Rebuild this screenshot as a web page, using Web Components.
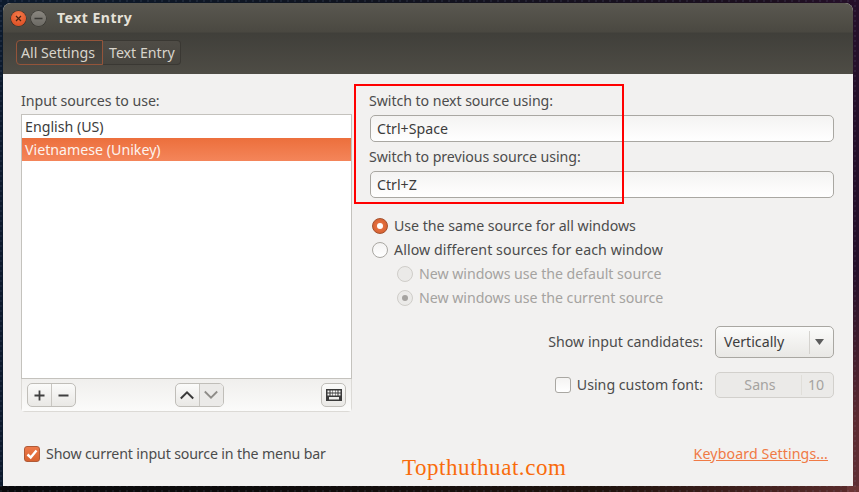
<!DOCTYPE html>
<html><head><meta charset="utf-8">
<style>
html,body{margin:0;padding:0;height:100%}
body{width:859px;height:492px;overflow:hidden;font-family:"Noto Sans","Open Sans",sans-serif}
</style></head><body>
<te-desktop>
  <te-window>
    <te-titlebar slot="title">Text Entry</te-titlebar>
    <te-breadcrumb slot="crumbs"></te-breadcrumb>
    <te-left slot="left"></te-left>
    <te-right slot="right"></te-right>
  </te-window>
</te-desktop>
<script>
const FONT='"Noto Sans","Open Sans",sans-serif';
function def(name,css,html){
  customElements.define(name,class extends HTMLElement{
    constructor(){super();const s=this.attachShadow({mode:'open'});
      s.innerHTML='<style>'+css+'</style>'+html;}
  });
}
def('te-desktop',`:host{display:block;width:859px;height:492px;box-sizing:border-box;padding:3px 6px 6px 3px;position:relative;
  background:
   radial-gradient(circle at 1px 1px,rgba(150,170,210,.35) 0,transparent 1px) 0 0/7px 5px,
   linear-gradient(180deg,transparent 0,transparent 55%,rgba(110,50,50,.75) 85%,rgba(110,55,55,.8) 100%) right/12px 100% no-repeat,
   linear-gradient(90deg,#0a0a0c 0,#0d0b0b 30%,#1f130d 70%,#4a2422 92%,#5c2c2c 100%) bottom/100% 6px no-repeat,
   linear-gradient(90deg,#0c1a2c 0,#10141f 40%,#1c0f1e 90%,#26102a 100%)}
  .red{position:absolute;left:354px;top:84px;width:266px;height:116px;border:2px solid #f00;pointer-events:none}
  .mark{position:absolute;left:402px;top:454px;font:23px/28px "Liberation Serif",serif;color:#f96c0c;letter-spacing:.55px;white-space:nowrap}`,
  `<slot></slot><div class="red"></div><div class="mark">Topthuthuat.com</div>`);
def('te-window',`:host{display:flex;flex-direction:column;height:100%;background:#f2f1f0;border-radius:8px 8px 0 0;overflow:hidden;color:#4c4c4c}
  .bars{background:linear-gradient(180deg,#5a5850 0,#4a4841 29px,#403f3a 30px,#4e4c45 71px);height:71px;flex:none;display:flex;flex-direction:column}
  .main{flex:1;display:grid;grid-template-columns:331px 465px;column-gap:17px;padding:0 0 0 18px;min-height:0}`,
  `<div class="bars"><slot name="title"></slot><slot name="crumbs"></slot></div><div class="main"><slot name="left"></slot><slot name="right"></slot></div>`);
def('te-titlebar',`:host{display:flex;align-items:center;height:29px;flex:none;padding:1px 0 0 8px;gap:5px;box-sizing:border-box;font:bold 14px ${FONT};color:#e6e2d9}
  .b{width:15px;height:15px;border-radius:50%;display:flex;align-items:center;justify-content:center;flex:none}
  .x{background:radial-gradient(circle at 50% 30%,#f47a4a,#d9461c);box-shadow:0 0 0 .5px #3a2a20}
  .m{background:linear-gradient(#8a8780,#6c6a64);box-shadow:0 0 0 .5px #33322e}
  span{margin:-2px 0 0 6px;letter-spacing:.5px}`,
  `<div class="b x"><svg width="9" height="9" viewBox="0 0 9 9"><path d="M2 2l5 5M7 2l-5 5" stroke="#4a2312" stroke-width="1.2" fill="none"/></svg></div>
   <div class="b m"><svg width="9" height="9" viewBox="0 0 9 9"><path d="M0.500 4.500h8" stroke="#3a3935" stroke-width="1.300" fill="none"/></svg></div>
   <span><slot></slot></span>`);
def('te-breadcrumb',`:host{display:flex;padding:8px 0 0 13px;font:14.2px/23px ${FONT};color:#d8d4cb}
  div{height:25px;box-sizing:border-box;border:1px solid #3a3833;background:linear-gradient(#4f4c46,#47453f);display:flex;align-items:center}
  .a{width:87px;padding-left:4px;border:1px solid #94543a;border-radius:4px 0 0 4px;background:linear-gradient(#403d37,#4a4640)}
  .b{width:78px;padding-left:6px;border-left:0;border-radius:0 4px 4px 0}`,
  `<div class="a">All Settings</div><div class="b">Text Entry</div>`);
def('te-left',`:host{display:flex;flex-direction:column;font:14.2px/20px ${FONT};color:#4c4c4c}
  .lab{padding-top:17px;height:23px;line-height:20px;letter-spacing:-.05px}
  .frame{height:298px;display:flex;flex-direction:column;box-sizing:border-box;border:1px solid #dcdad6;border-radius:0 0 4px 4px}
  .list{height:265px;flex:none;box-sizing:border-box;background:#fff;border:1px solid #c4c2bd;margin:-1px -1px 0}
  .row{height:23px;line-height:23px;padding-left:3px;color:#3c3c3c;white-space:nowrap}
  .sel{background:linear-gradient(#ec6f3c,#f4855a);color:#fdf3ee}
  .tools{flex:1;display:flex;align-items:center;justify-content:space-between;padding:0 5px;background:linear-gradient(#f0efed,#fbfbfa)}
  .grp{display:flex;height:24px;box-sizing:border-box;border:1px solid #c0beb9;border-radius:5px;background:linear-gradient(#fbfbfa,#e9e8e5);overflow:hidden}
  .grp span{display:flex;align-items:center;justify-content:center;height:100%}
  .grp span+span{border-left:1px solid #c8c6c1}
  .w23{width:23px}.dis{background:#ebeae8}
  .chk{display:flex;align-items:center;gap:6px;margin:32px 0 0 3px;height:20px;white-space:nowrap;letter-spacing:-.15px}
  .cb{width:16px;height:16px;box-sizing:border-box;border:1px solid #b05a36;border-radius:3px;background:linear-gradient(#ee7a4a,#d9622f);display:flex;align-items:center;justify-content:center}`,
  `<div class="lab">Input sources to use:</div>
   <div class="frame"><div class="list"><div class="row">English (US)</div><div class="row sel">Vietnamese (Unikey)</div></div>
   <div class="tools">
    <div class="grp"><span class="w23"><svg width="13" height="13" viewBox="0 0 13 13"><path d="M6.500 1.500v10M1.500 6.500h10" stroke="#3f3f3f" stroke-width="1.800" fill="none"/></svg></span><span class="w23"><svg width="13" height="13" viewBox="0 0 13 13"><path d="M1.500 6.500h10" stroke="#3f3f3f" stroke-width="1.800" fill="none"/></svg></span></div>
    <div class="grp" style="margin-left:1px"><span class="w23"><svg width="14" height="10" viewBox="0 0 14 10"><path d="M.8 8.500L7 2.300 13.200 8.500" stroke="#3a3a3a" stroke-width="2" fill="none"/></svg></span><span class="w23 dis"><svg width="14" height="10" viewBox="0 0 14 10"><path d="M.8 1.500L7 7.700 13.200 1.500" stroke="#8e8c88" stroke-width="1.800" fill="none"/></svg></span></div>
    <div class="grp"><span class="w23"><svg width="16" height="12" viewBox="0 0 16 12"><path fill-rule="evenodd" fill="#3a3a3a" d="M0 0h16v12H0zM1.500 1.500v2h2v-2zM4.500 1.500v2h2v-2zM7 1.500v2h2v-2zM9.500 1.500v2h2v-2zM12.500 1.500v2h2v-2zM1.500 4.500v2h2v-2zM4.500 4.500v2h2v-2zM7 4.500v2h2v-2zM9.500 4.500v2h2v-2zM12.500 4.500v2h2v-2zM3 8v2.500h10V8z"/></svg></span></div>
   </div></div>
   <div class="chk"><span class="cb"><svg width="12" height="12" viewBox="0 0 12 12"><path d="M1.500 6.500L4.700 9.500 10.500 2.500" stroke="#fff" stroke-width="2.400" fill="none"/></svg></span><span>Show current input source in the menu bar</span></div>`);
def('te-right',`:host{display:flex;flex-direction:column;font:14.2px/20px ${FONT};color:#4c4c4c;white-space:nowrap}
  .lab{height:20px;line-height:20px;letter-spacing:-.07px}
  .ent{margin:4px 0 5px 1px;width:464px;height:27px;box-sizing:border-box;border:1px solid #a9a7a2;border-radius:5px;background:linear-gradient(#f4f3f2,#fff);padding-left:6px;line-height:25px;color:#3c3c3c}
  .rad{height:24px;display:flex;align-items:center;gap:6px;padding-left:3px}
  .sub{padding-left:28px;color:#a5a3a0;letter-spacing:-.04px}
  .r{width:16px;height:16px;box-sizing:border-box;border-radius:50%;border:1px solid #a9a7a2;background:linear-gradient(#f4f3f2,#fff);display:flex;align-items:center;justify-content:center;flex:none}
  .on{background:radial-gradient(#ee7a4a,#d05a2a);border-color:#a5502c}
  .on i{width:6px;height:6px;border-radius:50%;background:#fff}
  .off{background:#ebeae8;border-color:#cfcdc9}
  .off i{width:6px;height:6px;border-radius:50%;background:#a5a3a0}
  .line{display:flex;justify-content:flex-end;align-items:center;gap:12px}
  .combo{width:119px;height:32px;box-sizing:border-box;border:1px solid #a9a7a2;border-radius:5px;background:linear-gradient(#fbfbfa,#e9e8e5);display:flex;align-items:center;padding-left:8px;color:#3c3c3c;justify-content:space-between}
  .combo b{height:23px;width:24px;box-sizing:border-box;padding-right:4px;border-left:1px solid #d4d2ce;display:flex;align-items:center;justify-content:center}
  .font{width:119px;height:26px;box-sizing:border-box;border:1px solid #d2d0cc;border-radius:5px;background:#ebeae8;color:#a5a3a0;display:flex;align-items:center}
  .font span{flex:1;text-align:center;padding-left:3px}
  .font em{font-style:normal;width:32px;box-sizing:border-box;padding-right:3px;text-align:center;border-left:1px solid #e0ded9;line-height:20px}
  .cb{width:16px;height:16px;box-sizing:border-box;border:1px solid #a9a7a2;border-radius:3px;background:linear-gradient(#f4f3f2,#fff)}
  .link{margin:46px 6px 0 auto;color:#f07a45;text-decoration:underline;letter-spacing:.1px}`,
  `<div class="lab" style="margin-top:17px">Switch to next source using:</div><div class="ent">Ctrl+Space</div>
   <div class="lab">Switch to previous source using:</div><div class="ent" style="margin-bottom:16px">Ctrl+Z</div>
   <div class="rad" style="letter-spacing:-.03px"><span class="r on"><i></i></span>Use the same source for all windows</div>
   <div class="rad" style="letter-spacing:.08px"><span class="r"></span>Allow different sources for each window</div>
   <div class="rad sub"><span class="r off"></span>New windows use the default source</div>
   <div class="rad sub"><span class="r off"><i></i></span>New windows use the current source</div>
   <div class="line" style="margin-top:16px"><span>Show input candidates:</span><div class="combo"><span>Vertically</span><b><svg width="9" height="6" viewBox="0 0 9 6"><path d="M0 0h9L4.500 6z" fill="#5c5c5c"/></svg></b></div></div>
   <div class="line" style="margin-top:14px"><span class="cb"></span><span style="margin-left:-6px">Using custom font:</span><div class="font"><span>Sans</span><em>10</em></div></div>
   <div class="link">Keyboard Settings...</div>`);
</script>
</body></html>
